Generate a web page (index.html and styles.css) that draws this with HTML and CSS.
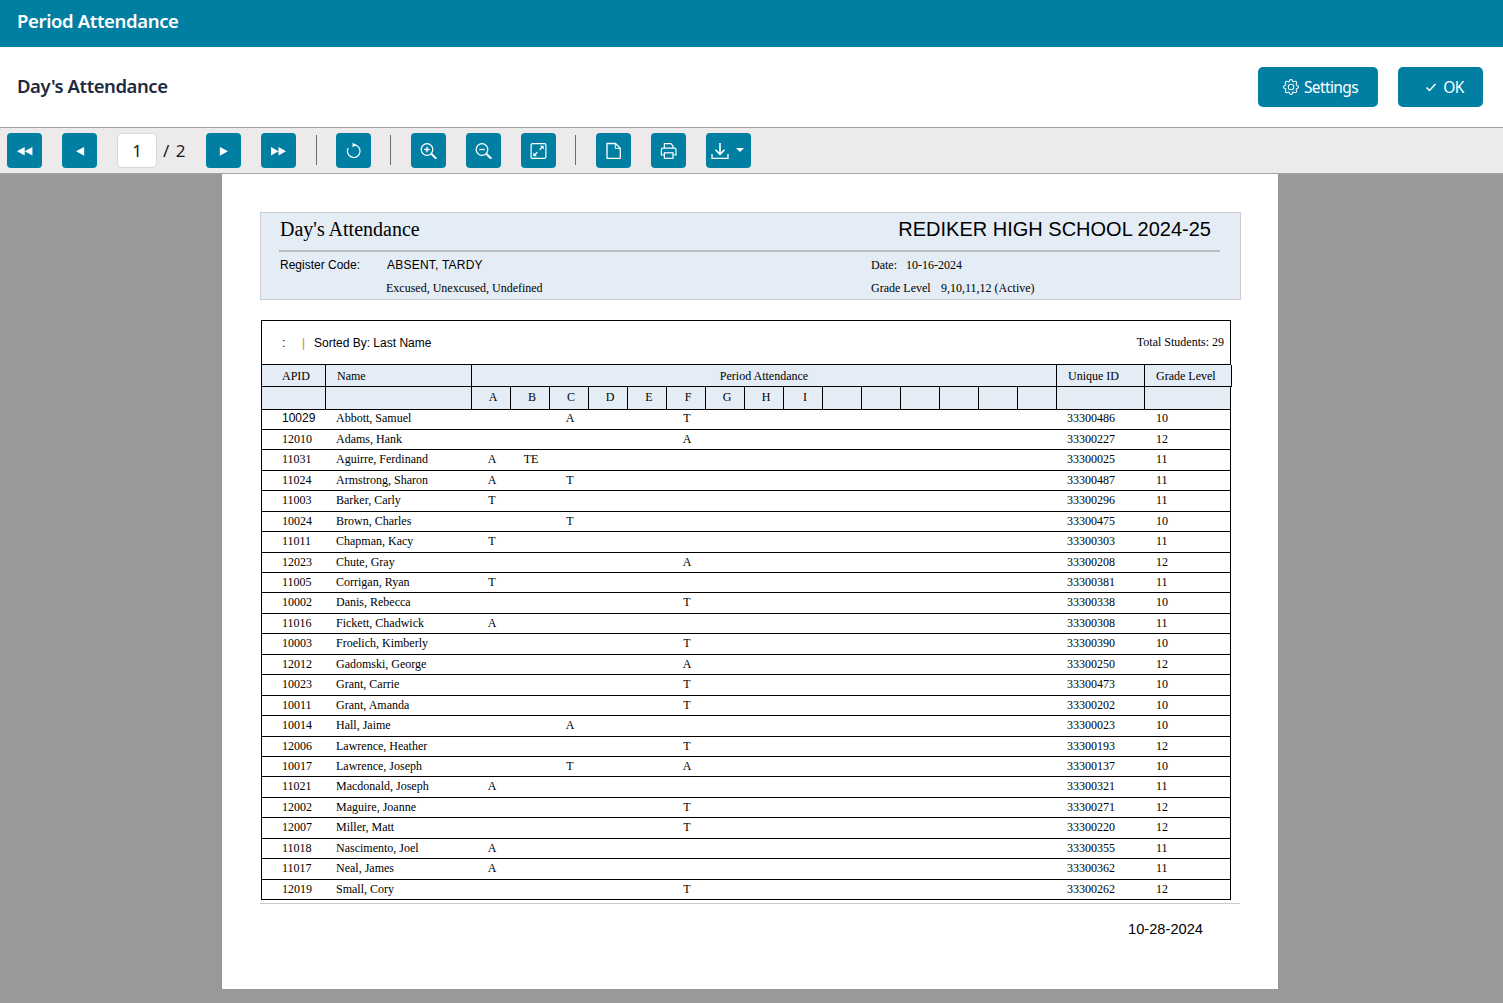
FILE: index.html
```html
<!DOCTYPE html>
<html lang="en">
<head>
<meta charset="utf-8">
<title>Period Attendance</title>
<link rel="stylesheet" href="styles.css">
</head>
<body>
<header class="topbar">Period Attendance</header>
<section class="subbar">
  <h1 class="subtitle">Day's Attendance</h1>
  <div class="actions">
    <button class="action settings"><svg viewBox="0 0 16 16" width="16" height="16" fill="#fff"><path d="M8 4.754a3.246 3.246 0 1 0 0 6.492 3.246 3.246 0 0 0 0-6.492zM5.754 8a2.246 2.246 0 1 1 4.492 0 2.246 2.246 0 0 1-4.492 0z"/><path d="M9.796 1.343c-.527-1.79-3.065-1.79-3.592 0l-.094.319a.873.873 0 0 1-1.255.52l-.292-.16c-1.64-.892-3.433.902-2.54 2.541l.159.292a.873.873 0 0 1-.52 1.255l-.319.094c-1.79.527-1.79 3.065 0 3.592l.319.094a.873.873 0 0 1 .52 1.255l-.16.292c-.892 1.64.901 3.434 2.541 2.54l.292-.159a.873.873 0 0 1 1.255.52l.094.319c.527 1.79 3.065 1.79 3.592 0l.094-.319a.873.873 0 0 1 1.255-.52l.292.16c1.64.893 3.434-.902 2.54-2.541l-.159-.292a.873.873 0 0 1 .52-1.255l.319-.094c1.79-.527 1.79-3.065 0-3.592l-.319-.094a.873.873 0 0 1-.52-1.255l.16-.292c.893-1.64-.902-3.433-2.541-2.54l-.292.159a.873.873 0 0 1-1.255-.52l-.094-.319zm-2.633.283c.246-.835 1.428-.835 1.674 0l.094.319a1.873 1.873 0 0 0 2.693 1.115l.291-.16c.764-.415 1.6.42 1.184 1.185l-.159.292a1.873 1.873 0 0 0 1.116 2.692l.318.094c.835.246.835 1.428 0 1.674l-.319.094a1.873 1.873 0 0 0-1.115 2.693l.16.291c.415.764-.42 1.6-1.185 1.184l-.291-.159a1.873 1.873 0 0 0-2.693 1.116l-.094.318c-.246.835-1.428.835-1.674 0l-.094-.319a1.873 1.873 0 0 0-2.692-1.115l-.292.16c-.764.415-1.6-.42-1.184-1.185l.159-.291A1.873 1.873 0 0 0 1.945 8.93l-.319-.094c-.835-.246-.835-1.428 0-1.674l.319-.094A1.873 1.873 0 0 0 3.06 4.377l-.16-.292c-.415-.764.42-1.6 1.185-1.184l.292.159a1.873 1.873 0 0 0 2.692-1.115l.094-.319z"/></svg>Settings</button>
    <button class="action ok"><svg viewBox="0 0 12 12" width="12" height="12"><path d="M1.500 6.500l3 3 6-6.500" fill="none" stroke="#fff" stroke-width="1.500"/></svg>OK</button>
  </div>
</section>
<nav class="toolbar">
  <button class="tool"><svg viewBox="0 0 17 16" width="17" height="16"><path d="M8.700 5.100v8.400L1 9.300zM16.400 5.100v8.400L8.700 9.300z" fill="#fff"/></svg></button>
  <button class="tool"><svg viewBox="0 0 16 16" width="16" height="16"><path d="M12.200 4.900v8.800L4 9.300z" fill="#fff"/></svg></button>
  <div class="pager"><span class="page-input">1</span><span class="page-total">/ 2</span></div>
  <button class="tool"><svg viewBox="0 0 16 16" width="16" height="16"><path d="M3.800 4.900v8.800L12 9.300z" fill="#fff"/></svg></button>
  <button class="tool"><svg viewBox="0 0 16 16" width="16" height="16"><path d="M0 5.100v8.400L7.500 9.300zM7.500 5.100v8.400L15 9.300z" fill="#fff"/></svg></button>
  <span class="sep"></span>
  <button class="tool"><svg viewBox="0 1 18 18" width="18" height="18"><path d="M8 4.900A6.300 6.300 0 1 1 3.300 8" fill="none" stroke="#fff" stroke-width="1.200"/><path d="M7.500 2.700l4 2.300-4 2.200z" fill="#fff"/></svg></button>
  <span class="sep sep-tight"></span>
  <button class="tool"><svg viewBox="0.5 -1 18 18" width="18" height="18"><circle cx="7.500" cy="7.500" r="5.800" fill="none" stroke="#fff" stroke-width="1.300"/><path d="M4.800 7.500h5.400M7.500 4.800v5.400" stroke="#fff" stroke-width="1.300"/><path d="M11.800 11.800l5 5" stroke="#fff" stroke-width="2"/></svg></button>
  <button class="tool"><svg viewBox="0.5 -1 18 18" width="18" height="18"><circle cx="7.500" cy="7.500" r="5.800" fill="none" stroke="#fff" stroke-width="1.300"/><path d="M4.800 7.500h5.400" stroke="#fff" stroke-width="1.300"/><path d="M11.800 11.800l5 5" stroke="#fff" stroke-width="2"/></svg></button>
  <button class="tool"><svg viewBox="0.5 -1 18 18" width="18" height="18"><rect x="1.600" y="1.600" width="14.800" height="14.800" rx="1.500" fill="none" stroke="#fff" stroke-width="1.200"/><path d="M10.200 7.800l3.300-3.300M7.800 10.200l-3.300 3.300" stroke="#fff" stroke-width="1.300"/><path d="M10.500 3.800h3.700v3.700zM7.500 14.200H3.800v-3.700z" fill="#fff"/></svg></button>
  <span class="sep sep-tight"></span>
  <button class="tool"><svg viewBox="0 -1 18 18" width="18" height="18"><path d="M2 1.500h8.500L15.300 6.300V15.700a.8.8 0 0 1-.8.8H2.800A.8.8 0 0 1 2 15.700z" fill="none" stroke="#fff" stroke-width="1.300"/><path d="M10.300 1.500V6.400H15.300" fill="none" stroke="#fff" stroke-width="1"/></svg></button>
  <button class="tool"><svg viewBox="0.3 -1 18 18" width="18" height="18"><path d="M4.700 6V1.700h6.500L13.300 4v2M4.500 13H1.700V7.500a1.300 1.300 0 0 1 1.300-1.300h12a1.300 1.300 0 0 1 1.300 1.300V13h-2.800" fill="none" stroke="#fff" stroke-width="1.200"/><rect x="4.700" y="10.800" width="8.600" height="5.500" fill="none" stroke="#fff" stroke-width="1.200"/></svg></button>
  <button class="tool tool-wide"><svg viewBox="0 -1 18 18" width="18" height="18"><path d="M9 1v11M4.500 7.800L9 12.300l4.500-4.500" fill="none" stroke="#fff" stroke-width="1.600"/><path d="M1 12v4.500h16V12" fill="none" stroke="#fff" stroke-width="1.300"/></svg><i class="caret"></i></button>
</nav>
<main class="viewer">
  <article class="sheet">
    <section class="banner">
      <div class="banner-top"><span class="rep-title">Day's Attendance</span><span class="school">REDIKER HIGH SCHOOL 2024-25</span></div>
      <div class="meta">
        <span class="arial lbl">Register Code:</span><span class="arial codes">ABSENT, TARDY</span><span class="date-l">Date:</span><span class="date-v">10-16-2024</span>
      </div>
      <div class="meta meta2">
        <span class="excused">Excused, Unexcused, Undefined</span><span class="date-l gl">Grade Level</span><span class="gl-v">9,10,11,12 (Active)</span>
      </div>
    </section>
    <section class="report">
      <div class="sort"><span class="arial colon">:</span><span class="arial pipe">|</span><span class="arial sorted">Sorted By: Last Name</span><span class="total">Total Students: 29</span></div>
      <div class="head h1">
        <span class="hc c-id">APID</span><span class="hc c-nm">Name</span><span class="hc c-pa">Period Attendance</span><span class="hc c-ui">Unique ID</span><span class="hc c-gr">Grade Level</span>
      </div>
      <div class="head h2">
        <span class="hc c-id"></span><span class="hc c-nm"></span><span class="p">A</span><span class="p">B</span><span class="p">C</span><span class="p">D</span><span class="p">E</span><span class="p">F</span><span class="p">G</span><span class="p">H</span><span class="p">I</span><span class="p"></span><span class="p"></span><span class="p"></span><span class="p"></span><span class="p"></span><span class="p"></span><span class="hc c-ui"></span><span class="hc c-gr"></span>
      </div>
      <div class="rows">
        <div class="row"><span class="id first">10029</span><span class="nm">Abbott, Samuel</span><span class="m pc">A</span><span class="m pf">T</span><span class="ui">33300486</span><span class="gr">10</span></div>
        <div class="row"><span class="id">12010</span><span class="nm">Adams, Hank</span><span class="m pf">A</span><span class="ui">33300227</span><span class="gr">12</span></div>
        <div class="row"><span class="id">11031</span><span class="nm">Aguirre, Ferdinand</span><span class="m pa">A</span><span class="m pb">TE</span><span class="ui">33300025</span><span class="gr">11</span></div>
        <div class="row"><span class="id">11024</span><span class="nm">Armstrong, Sharon</span><span class="m pa">A</span><span class="m pc">T</span><span class="ui">33300487</span><span class="gr">11</span></div>
        <div class="row"><span class="id">11003</span><span class="nm">Barker, Carly</span><span class="m pa">T</span><span class="ui">33300296</span><span class="gr">11</span></div>
        <div class="row"><span class="id">10024</span><span class="nm">Brown, Charles</span><span class="m pc">T</span><span class="ui">33300475</span><span class="gr">10</span></div>
        <div class="row"><span class="id">11011</span><span class="nm">Chapman, Kacy</span><span class="m pa">T</span><span class="ui">33300303</span><span class="gr">11</span></div>
        <div class="row"><span class="id">12023</span><span class="nm">Chute, Gray</span><span class="m pf">A</span><span class="ui">33300208</span><span class="gr">12</span></div>
        <div class="row"><span class="id">11005</span><span class="nm">Corrigan, Ryan</span><span class="m pa">T</span><span class="ui">33300381</span><span class="gr">11</span></div>
        <div class="row"><span class="id">10002</span><span class="nm">Danis, Rebecca</span><span class="m pf">T</span><span class="ui">33300338</span><span class="gr">10</span></div>
        <div class="row"><span class="id">11016</span><span class="nm">Fickett, Chadwick</span><span class="m pa">A</span><span class="ui">33300308</span><span class="gr">11</span></div>
        <div class="row"><span class="id">10003</span><span class="nm">Froelich, Kimberly</span><span class="m pf">T</span><span class="ui">33300390</span><span class="gr">10</span></div>
        <div class="row"><span class="id">12012</span><span class="nm">Gadomski, George</span><span class="m pf">A</span><span class="ui">33300250</span><span class="gr">12</span></div>
        <div class="row"><span class="id">10023</span><span class="nm">Grant, Carrie</span><span class="m pf">T</span><span class="ui">33300473</span><span class="gr">10</span></div>
        <div class="row"><span class="id">10011</span><span class="nm">Grant, Amanda</span><span class="m pf">T</span><span class="ui">33300202</span><span class="gr">10</span></div>
        <div class="row"><span class="id">10014</span><span class="nm">Hall, Jaime</span><span class="m pc">A</span><span class="ui">33300023</span><span class="gr">10</span></div>
        <div class="row"><span class="id">12006</span><span class="nm">Lawrence, Heather</span><span class="m pf">T</span><span class="ui">33300193</span><span class="gr">12</span></div>
        <div class="row"><span class="id">10017</span><span class="nm">Lawrence, Joseph</span><span class="m pc">T</span><span class="m pf">A</span><span class="ui">33300137</span><span class="gr">10</span></div>
        <div class="row"><span class="id">11021</span><span class="nm">Macdonald, Joseph</span><span class="m pa">A</span><span class="ui">33300321</span><span class="gr">11</span></div>
        <div class="row"><span class="id">12002</span><span class="nm">Maguire, Joanne</span><span class="m pf">T</span><span class="ui">33300271</span><span class="gr">12</span></div>
        <div class="row"><span class="id">12007</span><span class="nm">Miller, Matt</span><span class="m pf">T</span><span class="ui">33300220</span><span class="gr">12</span></div>
        <div class="row"><span class="id">11018</span><span class="nm">Nascimento, Joel</span><span class="m pa">A</span><span class="ui">33300355</span><span class="gr">11</span></div>
        <div class="row"><span class="id">11017</span><span class="nm">Neal, James</span><span class="m pa">A</span><span class="ui">33300362</span><span class="gr">11</span></div>
        <div class="row"><span class="id">12019</span><span class="nm">Small, Cory</span><span class="m pf">T</span><span class="ui">33300262</span><span class="gr">12</span></div>
      </div>
    </section>
    <footer class="sheet-foot"><span>10-28-2024</span></footer>
  </article>
</main>
</body>
</html>
```
FILE: styles.css
```css
* { box-sizing: border-box; }
html, body { margin: 0; height: 100%; }
body { width: 1503px; height: 1003px; overflow: hidden; display: flex; flex-direction: column; font-family: "Noto Sans", sans-serif; background: #999; }
button { font-family: inherit; border: 0; padding: 0; cursor: pointer; }

.topbar { height: 47px; flex: none; background: #007fa3; color: #fff; font-size: 18.5px; font-weight: 600; letter-spacing: -0.36px; line-height: 41px; padding-left: 17px; }

.subbar { height: 80px; flex: none; background: #fff; display: flex; align-items: center; justify-content: space-between; padding: 0 20px 0 17px; }
.subtitle { margin: 0 0 4px; font-size: 18.5px; font-weight: 600; letter-spacing: -0.44px; color: #1f2a40; }
.actions { display: flex; gap: 20px; }
.action { height: 40px; background: #007fa3; color: #fff; border-radius: 5px; font-size: 15.5px; letter-spacing: -0.6px; display: flex; align-items: center; justify-content: center; }
.settings { width: 120px; gap: 5px; padding-left: 5px; }
.ok { width: 85px; gap: 6px; padding-left: 8px; }

.toolbar { height: 47px; flex: none; background: #eceaeb; border-top: 1px solid #a3a3a3; border-bottom: 1px solid #a3a3a3; display: flex; align-items: center; gap: 20px; padding: 0 0 1px 7px; }
.tool { width: 35px; height: 35px; background: #007fa3; border-radius: 4px; display: flex; align-items: center; justify-content: center; }
.tool-wide { width: 45px; justify-content: flex-start; padding-left: 5px; position: relative; }
.caret { position: absolute; right: 7px; top: 15px; width: 0; height: 0; border-left: 4px solid transparent; border-right: 4px solid transparent; border-top: 4px solid #fff; }
.pager { display: flex; align-items: center; gap: 6px; font-size: 17px; color: #1a1a2a; }
.page-input { width: 40px; height: 35px; padding-top: 1px; background: #fff; border: 1px solid #d8d8d8; border-radius: 5px; display: flex; align-items: center; justify-content: center; }
.page-total { width: 23px; padding-top: 1px; white-space: nowrap; word-spacing: 2px; }
.sep { width: 1px; height: 30px; background: #6b6b6b; margin-right: -1px; }
.sep-tight { margin-left: -1px; margin-right: 0; }

.viewer { flex: 1; min-height: 0; background: #999; display: flex; justify-content: center; align-items: flex-start; padding-right: 3px; }
.sheet { width: 1056px; height: 815px; background: #fff; padding: 38px 0 0 38px; font-family: "Liberation Serif", serif; font-size: 12px; color: #000; }
.arial { font-family: "Liberation Sans", sans-serif; }

.banner { width: 981px; height: 88px; background: #e4ecf5; border: 1px solid #ccc; padding: 0 20px 0 18px; }
.banner-top { height: 39px; border-bottom: 2px solid #bbb; display: flex; justify-content: space-between; align-items: center; padding: 0 9px 5px 1px; }
.rep-title { font-size: 20px; }
.school { font-family: "Liberation Sans", sans-serif; font-size: 20px; }
.meta { display: flex; height: 23px; padding-top: 6px; line-height: 14px; }
.lbl { width: 108px; padding-left: 1px; }
.codes { width: 484px; letter-spacing: 0.22px; }
.date-l { width: 35px; }
.excused { margin-left: 107px; width: 485px; }
.gl { width: 70px; }

.report { width: 970px; height: 580px; margin: 20px 0 0 1px; border: 1px solid #000; border-bottom: 0; }
.sort { height: 44px; border-bottom: 1px solid #000; display: flex; align-items: center; padding: 0 6px 0 20px; }
.colon { width: 20px; }
.pipe { width: 12px; color: #d98a00; }
.total { margin-left: auto; }

.head { display: grid; background: #e4ecf5; }
.h1 { height: 22px; margin-right: -2px; grid-template-columns: 64px 146px 585px 88px 87px; }
.h2 { height: 22px; grid-template-columns: 64px 146px repeat(15, 39px) 88px 85px; }
.hc, .p { border-right: 1px solid #000; border-bottom: 1px solid #000; line-height: 21px; text-align: left; padding-left: 20px; white-space: nowrap; overflow: hidden; background: #e4ecf5; }
.h1 .hc { line-height: 23px; }
.c-nm, .c-ui, .c-gr { padding-left: 11px; }
.c-pa { text-align: center; padding: 0; }
.p { text-align: center; padding: 0 0 0 4px; }
.h2 .p, .h2 .c-nm, .h2 .c-ui { height: 23px; align-self: start; position: relative; }
.h2 .c-gr { border-right: 0; }

.rows { height: 491.2px; padding-top: 0.33px; display: grid; grid-auto-rows: 20.46px; }
.row { display: grid; grid-template-columns: 64px 146px repeat(15, 39px) 88px 85px; border-bottom: 1px solid #000; line-height: 19px; white-space: nowrap; }
.row > span { grid-row: 1; }
.id { grid-column: 1; padding-left: 20px; }
.first { font-family: "Liberation Sans", sans-serif; }
.nm { grid-column: 2; padding-left: 10px; }
.m { text-align: center; padding-left: 1px; }
.pa { grid-column: 3; }
.pb { grid-column: 4; }
.pc { grid-column: 5; }
.pf { grid-column: 8; }
.ui { grid-column: 18; padding-left: 10px; }
.gr { grid-column: 19; padding-left: 11px; }

.sheet-foot { width: 980px; height: 42px; margin-top: 3px; border-top: 1px solid #ccc; display: flex; justify-content: flex-end; padding: 17px 37px 0 0; font-family: "Liberation Sans", sans-serif; font-size: 14.67px; }
```
